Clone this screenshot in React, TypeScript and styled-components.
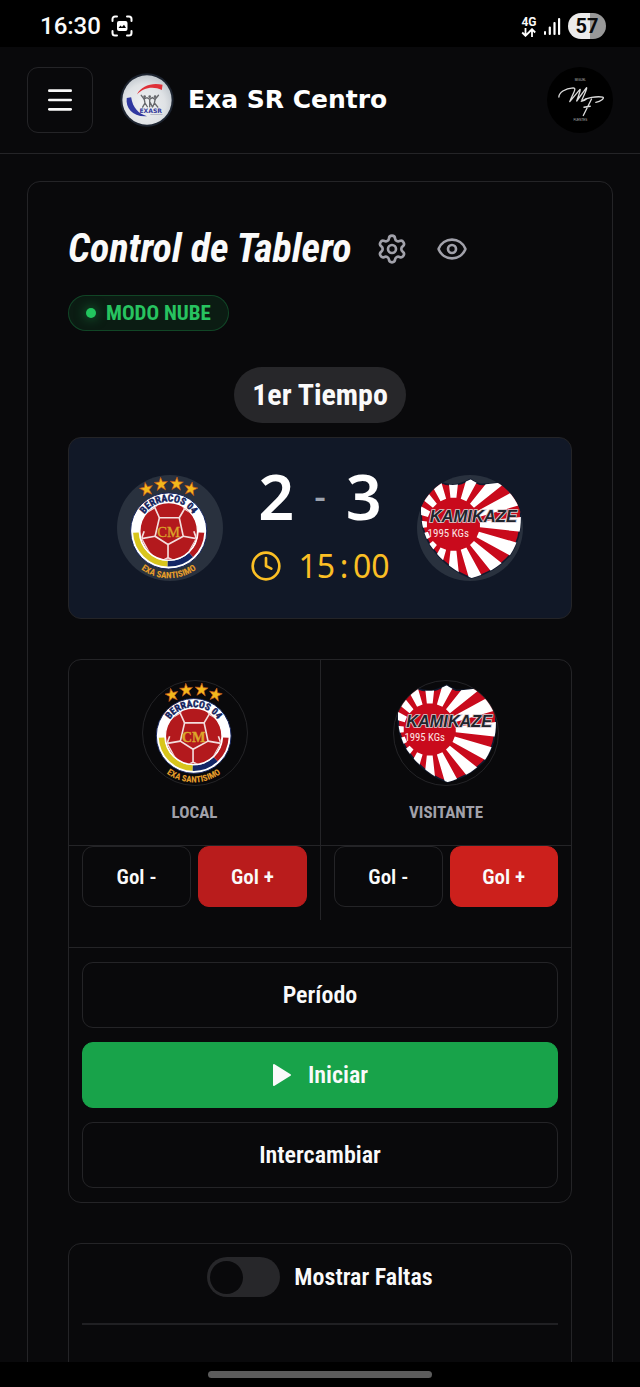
import React from "react";
import styled, { createGlobalStyle, css } from "styled-components";
import { Clock, Eye, Menu } from "lucide-react";

const narrow = `"Roboto Condensed", Roboto, sans-serif`;
const line = "#242427";
const ink = "#fafafa";
const surface = "#09090b";

const GlobalStyle = createGlobalStyle`
  *, *::before, *::after { box-sizing: border-box; }
  body { margin: 0; background: #000; color: ${ink}; font-family: ${narrow}; }
  h1, p { margin: 0; }
  svg { display: block; flex: none; }
`;

const Screen = styled.div`
  display: flex;
  flex-direction: column;
  height: 100vh;
  background: ${surface};
`;

const StatusBar = styled.div`
  flex: none;
  display: flex;
  align-items: center;
  justify-content: space-between;
  height: 47px;
  padding: 5px 34px 0 40px;
  background: #000;
  font-family: Roboto, sans-serif;
`;

const StatusGroup = styled.div<{ $gap: number }>`
  display: flex;
  align-items: center;
  gap: ${(p) => p.$gap}px;
`;

const Time = styled.span`
  font-size: 24px;
  font-weight: 500;
  line-height: 28px;
`;

const Network = styled.div`
  display: flex;
  flex-direction: column;
  align-items: center;
  font-size: 12px;
  font-weight: 700;
  line-height: 12px;
`;

const Battery = styled.div`
  width: 38px;
  height: 26px;
  border-radius: 13px;
  background: linear-gradient(90deg, #ececec 57%, #989898 57%);
  color: #0a0a0a;
  font-size: 20px;
  font-weight: 700;
  line-height: 27px;
  text-align: center;
`;

const Header = styled.header`
  flex: none;
  display: flex;
  align-items: center;
  height: 107px;
  padding: 0 27px;
  border-bottom: 1px solid ${line};
`;

const MenuButton = styled.button`
  display: grid;
  place-items: center;
  width: 66px;
  height: 66px;
  padding: 0;
  border: 1px solid ${line};
  border-radius: 11px;
  background: transparent;
  color: ${ink};
`;

const Brand = styled.a`
  display: flex;
  align-items: center;
  gap: 14px;
  margin-left: 27px;
  color: #fff;
  font-family: "DejaVu Sans", sans-serif;
  font-size: 25px;
  font-weight: 700;
  line-height: 32px;
  text-decoration: none;
  white-space: nowrap;
`;

const AvatarButton = styled.button`
  width: 66px;
  height: 66px;
  margin-left: auto;
  padding: 0;
  border: 0;
  border-radius: 50%;
  background: #000;
`;

const Scroller = styled.main`
  flex: 1;
  min-height: 0;
  padding: 27px 27px 0;
  overflow-y: auto;
  scrollbar-width: none;
`;

const Panel = styled.section`
  display: flex;
  flex-direction: column;
  gap: 40px;
  padding: 40px;
  border: 1px solid ${line};
  border-radius: 13px;
`;

const Heading = styled.div`
  display: flex;
  flex-direction: column;
  align-items: flex-start;
  gap: 20px;
  margin-bottom: -4px;
`;

const TitleRow = styled.div`
  display: flex;
  align-items: center;
  height: 53px;
`;

const Title = styled.h1`
  margin-right: 24px;
  font-size: 40px;
  font-style: italic;
  font-weight: 700;
  line-height: 56px;
  white-space: nowrap;
`;

const IconButton = styled.button`
  display: grid;
  place-items: center;
  width: 32px;
  height: 32px;
  margin-right: 28px;
  padding: 0;
  border: 0;
  background: transparent;
  color: #a1a1aa;
`;

const ModeBadge = styled.span`
  display: flex;
  align-items: center;
  gap: 10px;
  height: 36px;
  padding: 0 17px;
  border: 1px solid rgba(34, 197, 94, 0.25);
  border-radius: 18px;
  background: rgba(34, 197, 94, 0.1);
  color: #27c360;
  font-size: 21px;
  font-weight: 700;
  line-height: 24px;
`;

const Dot = styled.i`
  width: 10px;
  height: 10px;
  border-radius: 50%;
  background: #22c55e;
  box-shadow: 0 0 12px rgba(34, 197, 94, 0.6);
`;

const Match = styled.div`
  display: flex;
  flex-direction: column;
  align-items: center;
  gap: 14px;
`;

const PeriodPill = styled.span`
  padding: 10px 18px;
  border-radius: 28px;
  background: #27272a;
  font-size: 30px;
  font-weight: 700;
  line-height: 36px;
`;

const Scoreboard = styled.div`
  display: flex;
  align-items: center;
  justify-content: center;
  gap: 27px;
  width: 100%;
  height: 182px;
  border: 1px solid ${line};
  border-radius: 13px;
  background: #111827;
`;

const Disc = styled.div<{ $filled?: boolean }>`
  flex: none;
  width: 106px;
  height: 106px;
  border-radius: 50%;
  overflow: hidden;
  ${(p) =>
    p.$filled
      ? css`
          background: #29313e;
        `
      : css`
          border: 1px solid ${line};
        `}
`;

const ScoreColumn = styled.div`
  display: flex;
  flex-direction: column;
  align-items: center;
  gap: 14px;
  font-family: "Noto Sans", sans-serif;
`;

const Score = styled.div`
  display: flex;
  align-items: center;
  gap: 20px;
  color: #fff;
  font-size: 63px;
  font-weight: 600;
  line-height: 62px;
`;

const Dash = styled.span`
  color: #9ca3af;
  font-size: 36px;
  font-weight: 500;
`;

const GameClock = styled.div`
  display: flex;
  align-items: center;
  gap: 16px;
  height: 50px;
  color: #fbbf24;
  font-size: 32px;
  line-height: 50px;
`;

const Colon = styled.span`
  display: inline-block;
  width: 18px;
  text-align: center;
`;

const Card = styled.div`
  border: 1px solid ${line};
  border-radius: 13px;
`;

const Teams = styled.div`
  display: grid;
  grid-template-columns: 1fr 1fr;
`;

const Team = styled.div`
  & + & {
    border-left: 1px solid ${line};
  }
`;

const TeamHead = styled.div`
  display: flex;
  flex-direction: column;
  align-items: center;
  gap: 14px;
  height: 186px;
  padding-top: 20px;
  border-bottom: 1px solid ${line};
  color: #a1a1aa;
  font-size: 17px;
  font-weight: 700;
  line-height: 24px;
`;

const GoalRow = styled.div`
  display: grid;
  grid-template-columns: 1fr 1fr;
  gap: 7px;
  padding: 0 13px 13px;
`;

const ActionButton = styled.button<{ $fill?: string; $compact?: boolean }>`
  display: flex;
  align-items: center;
  justify-content: center;
  gap: 16px;
  height: ${(p) => (p.$compact ? 61 : 66)}px;
  padding: 0;
  border: 1px solid ${(p) => p.$fill ?? line};
  border-radius: 11px;
  background: ${(p) => p.$fill ?? "transparent"};
  color: ${ink};
  font-family: inherit;
  font-size: ${(p) => (p.$compact ? 21 : 24)}px;
  font-weight: 600;
  line-height: 32px;
`;

const Actions = styled.div`
  display: flex;
  flex-direction: column;
  gap: 14px;
  margin-top: 27px;
  padding: 14px 13px;
  border-top: 1px solid ${line};
`;

const FoulsCard = styled(Card)`
  height: 240px;
  padding: 13px;
`;

const SwitchLabel = styled.label`
  display: flex;
  align-items: center;
  justify-content: center;
  gap: 14px;
  padding-bottom: 26px;
  border-bottom: 2px solid #202023;
  font-size: 24px;
  font-weight: 600;
  line-height: 40px;
`;

const Switch = styled.input`
  display: flex;
  align-items: center;
  appearance: none;
  width: 73px;
  height: 40px;
  margin: 0;
  padding: 3px;
  border-radius: 20px;
  background: #27272a;

  &::before {
    content: "";
    width: 33px;
    height: 33px;
    border-radius: 50%;
    background: ${surface};
  }

  &:checked {
    justify-content: flex-end;
    background: #16a34a;
  }
`;

const GestureBar = styled.div`
  flex: none;
  display: flex;
  justify-content: center;
  height: 25px;
  padding-top: 9px;
  background: #000;
`;

const GestureHandle = styled.i`
  width: 35%;
  height: 7px;
  border-radius: 4px;
  background: #5c5c5c;
`;

function CaptureIcon() {
  return (
    <svg width="22" height="22" viewBox="0 0 22 22" fill="none" stroke="#fff" strokeWidth="2" strokeLinecap="round">
      <path d="M1.500 6V4A2.500 2.500 0 0 1 4 1.500H6M16 1.500H18A2.500 2.500 0 0 1 20.500 4V6M20.500 16V18A2.500 2.500 0 0 1 18 20.500H16M6 20.500H4A2.500 2.500 0 0 1 1.500 18V16" />
      <rect x="6" y="6" width="10.500" height="10" rx="2" fill="#fff" stroke="none" />
      <path d="M7.500 13L9.500 10.500L11 12L13 9.800L15 13Z" fill="#000" stroke="none" />
    </svg>
  );
}

function DataArrows() {
  return (
    <svg width="16" height="9" viewBox="0 0 16 9" fill="none" stroke="#fff" strokeWidth="1.800">
      <path d="M4.500 0V7.500M1.200 4.500L4.500 7.800L7.800 4.500M11 9V1.500M7.800 4.500L11 1.200L14.200 4.500" />
    </svg>
  );
}

function SignalBars() {
  return (
    <svg width="17" height="18" viewBox="0 0 17 18" fill="#fff">
      <rect x="0" y="14" width="2" height="4" rx="1" />
      <rect x="4.700" y="9.500" width="2.200" height="8.500" rx="1" />
      <rect x="9.400" y="5" width="2.200" height="13" rx="1" />
      <rect x="14" y="1" width="2.200" height="17" rx="1" />
    </svg>
  );
}

function GearIcon() {
  return (
    <svg width="32" height="32" viewBox="0 0 24 24" fill="none" stroke="currentColor" strokeWidth="2" strokeLinecap="round" strokeLinejoin="round">
      <path d="M9.671 4.136a2.340 2.340 0 0 1 4.659 0 2.340 2.340 0 0 0 3.319 1.915 2.340 2.340 0 0 1 2.330 4.033 2.340 2.340 0 0 0 0 3.831 2.340 2.340 0 0 1-2.330 4.033 2.340 2.340 0 0 0-3.319 1.915 2.340 2.340 0 0 1-4.659 0 2.340 2.340 0 0 0-3.320-1.915 2.340 2.340 0 0 1-2.330-4.033 2.340 2.340 0 0 0 0-3.831A2.340 2.340 0 0 1 6.350 6.051a2.340 2.340 0 0 0 3.319-1.915" />
      <circle cx="12" cy="12" r="3" />
    </svg>
  );
}

function ExaLogo() {
  return (
    <svg width="54" height="54" viewBox="0 0 160 160">
      <defs>
        <radialGradient id="exa-shade" cx="45%" cy="60%" r="60%">
          <stop offset="0" stopColor="#f1f2f3" />
          <stop offset="0.700" stopColor="#dfe2e5" />
          <stop offset="1" stopColor="#c3c9cf" />
        </radialGradient>
      </defs>
      <circle cx="80" cy="80" r="79" fill="#1d2430" />
      <circle cx="80" cy="80" r="73" fill="url(#exa-shade)" />
      <path d="M50 64C63 38 94 28 126 35L124 50C98 38 68 43 50 64Z" fill="#df3038" />
      <path d="M20 74C16 104 38 131 80 128C55 121 38 104 33 72Z" fill="#3038a0" />
      <g stroke="#66686c" strokeWidth="4" fill="none" strokeLinecap="round">
        <path d="M63 66L71 77L80 73L88 78L96 73L104 78L114 66" />
        <path d="M72 78L74 89L67 101M74 89L81 100M88 79V100M90 88L96 101M104 78L102 89L97 100M102 89L112 101" />
      </g>
      <g fill="#66686c">
        <circle cx="73" cy="70" r="4" />
        <circle cx="88" cy="70" r="4" />
        <circle cx="104" cy="70" r="4" />
      </g>
      <text x="91" y="118" textAnchor="middle" fontFamily="DejaVu Sans, sans-serif" fontSize="18" fontWeight="700" fill="#343a9c">EXASR</text>
      <path d="M90 123H126" stroke="#9fa3b5" strokeWidth="2" />
    </svg>
  );
}

function SignatureLogo() {
  return (
    <svg width="66" height="66" viewBox="0 0 200 200" fill="none" stroke="#dcdcdc" strokeLinecap="round" strokeLinejoin="round">
      <path d="M36 91C36 79 54 64 79 63C92 64 78 80 69 105L98 70C104 62 99 78 90 103L117 66C124 56 120 70 106 99C106 106 114 101 119 97" strokeWidth="4" />
      <path d="M104 104C120 93 150 88 169 91C176 94 163 104 148 107M135 97L110 147M112 122L131 119" strokeWidth="4" />
      <g fill="#bdbdbd" stroke="none" fontFamily="Liberation Sans, sans-serif" fontSize="9" textAnchor="middle">
        <text x="101" y="43">MIGUEL</text>
        <text x="101" y="165">FUENTES</text>
      </g>
    </svg>
  );
}

const STAR = "M0-21L5-7H20L8 3L13 18L0 9L-13 18L-8 3L-20-7H-5Z";
const STARS = [
  [89, 43, -12],
  [133, 28, -4],
  [180, 27, 4],
  [223, 42, 12],
];

function BerracosCrest({ id }: { id: string }) {
  return (
    <svg width="100%" viewBox="0 0 320 320" role="img" aria-label="Berracos 04">
      <defs>
        <path id={`${id}-top`} d="M67 169A89 89 0 0 1 245 169" />
        <path id={`${id}-base`} d="M14 170A142 142 0 0 0 298 170" />
        <clipPath id={`${id}-ball`}>
          <circle cx="156" cy="170" r="85" />
        </clipPath>
      </defs>
      {STARS.map(([x, y, turn]) => (
        <path key={x} d={STAR} transform={`translate(${x} ${y}) rotate(${turn})`} fill="#f2b91c" stroke="#c8501c" strokeWidth="2" />
      ))}
      <circle cx="156" cy="169" r="115" fill="#fff" stroke="#15245e" strokeWidth="3" />
      <g fill="none" strokeWidth="17">
        <path d="M57 174A99 99 0 0 0 153 268" stroke="#d8c51c" />
        <path d="M153 268A99 99 0 0 0 224 241" stroke="#142666" />
        <path d="M224 241A99 99 0 0 0 255 174" stroke="#b3191d" />
      </g>
      <circle cx="156" cy="170" r="87" fill="#b3191d" stroke="#fff" strokeWidth="4" />
      <g clipPath={`url(#${id}-ball)`} fill="none" stroke="#f3dede" strokeWidth="5">
        <path d="M128 129H188L200 185L154 210L115 185Z" />
        <path d="M128 129L114 98L124 84M188 129L204 102L192 84M200 185L240 192M232 170L240 192L214 238M154 210V250L130 262M154 250L180 262M115 185L74 192L82 170M74 192L100 240" />
        <path d="M114 98L84 116M204 102L230 118" />
      </g>
      <text x="156" y="188" textAnchor="middle" fontFamily="Liberation Serif, serif" fontSize="44" fill="#dba52a" stroke="#dba52a">CM</text>
      <text fontFamily={narrow} fontSize="30" fontWeight="800" fill="#15245e" stroke="#15245e" textAnchor="middle">
        <textPath href={`#${id}-top`} startOffset="50%">BERRACOS 04</textPath>
      </text>
      <text fontFamily={narrow} fontSize="27" fontWeight="800" fill="#e39b2a" textAnchor="middle">
        <textPath href={`#${id}-base`} startOffset="50%">EXA SANTISIMO</textPath>
      </text>
    </svg>
  );
}

const RAYS = Array.from({ length: 16 }, (_, i) => {
  const turn = (i * Math.PI) / 8;
  const point = (r: number, offset: number) =>
    `${Math.round(110 + r * Math.cos(turn + offset))} ${Math.round(149 + r * Math.sin(turn + offset))}`;
  return `M${point(80, -0.11)}L${point(320, -0.11)}L${point(320, 0.11)}L${point(80, 0.11)}Z`;
}).join("");

const SHIELD =
  "M72 23C92 32 120 32 132 26C146 21 155 17 162 13C168 18 179 24 190 28C215 30 235 24 255 23C275 38 294 58 311 87C318 145 312 194 282 240C250 278 205 301 165 311C120 296 75 262 40 212C17 175 9 128 13 82C26 54 48 34 72 23Z";

function KamikazeCrest({ id }: { id: string }) {
  return (
    <svg width="100%" viewBox="0 0 320 320" role="img" aria-label="Kamikaze">
      <clipPath id={`${id}-shield`}>
        <path d={SHIELD} />
      </clipPath>
      <path d={SHIELD} fill="#c90a1c" stroke="#111a2e" strokeWidth="5" />
      <path d={RAYS} fill="#fff" clipPath={`url(#${id}-shield)`} />
      <text x="170" y="143" textAnchor="middle" fontFamily="Liberation Sans, sans-serif" fontSize="50" fontStyle="italic" fontWeight="700" fill="#20242c" stroke="#d9cdd2" strokeWidth="5" paintOrder="stroke">KAMIKAZE</text>
      <text x="32" y="186" fontFamily={narrow} fontSize="33" fontWeight="400" fill="#fbe3e3">1995 KGs</text>
    </svg>
  );
}

function PlayIcon() {
  return (
    <svg width="20" height="24" viewBox="0 0 20 24" fill="#fafafa" stroke="#fafafa" strokeWidth="2" strokeLinejoin="round">
      <path d="M2 2L18 12L2 22Z" />
    </svg>
  );
}

function TeamControls({ label, fill, children }: { label: string; fill: string; children: React.ReactNode }) {
  return (
    <Team>
      <TeamHead>
        <Disc>{children}</Disc>
        <p>{label}</p>
      </TeamHead>
      <GoalRow>
        <ActionButton $compact>Gol -</ActionButton>
        <ActionButton $compact $fill={fill}>Gol +</ActionButton>
      </GoalRow>
    </Team>
  );
}

export default function App() {
  return (
    <Screen>
      <GlobalStyle />
      <StatusBar>
        <StatusGroup $gap={10}>
          <Time>16:30</Time>
          <CaptureIcon />
        </StatusGroup>
        <StatusGroup $gap={7}>
          <Network>
            4G
            <DataArrows />
          </Network>
          <SignalBars />
          <Battery>57</Battery>
        </StatusGroup>
      </StatusBar>
      <Header>
        <MenuButton aria-label="Menú">
          <Menu size={32} />
        </MenuButton>
        <Brand href="#inicio">
          <ExaLogo />
          Exa SR Centro
        </Brand>
        <AvatarButton aria-label="Perfil">
          <SignatureLogo />
        </AvatarButton>
      </Header>
      <Scroller>
        <Panel>
          <Heading>
            <TitleRow>
              <Title>Control de Tablero</Title>
              <IconButton aria-label="Configuración">
                <GearIcon />
              </IconButton>
              <IconButton aria-label="Vista previa">
                <Eye size={32} />
              </IconButton>
            </TitleRow>
            <ModeBadge>
              <Dot />
              MODO NUBE
            </ModeBadge>
          </Heading>
          <Match>
            <PeriodPill>1er Tiempo</PeriodPill>
            <Scoreboard>
              <Disc $filled>
                <BerracosCrest id="score-local" />
              </Disc>
              <ScoreColumn>
                <Score>
                  <span>2</span>
                  <Dash>-</Dash>
                  <span>3</span>
                </Score>
                <GameClock>
                  <Clock size={32} />
                  <span>
                    15<Colon>:</Colon>00
                  </span>
                </GameClock>
              </ScoreColumn>
              <Disc $filled>
                <KamikazeCrest id="score-visitor" />
              </Disc>
            </Scoreboard>
          </Match>
          <Card>
            <Teams>
              <TeamControls label="LOCAL" fill="#b91c1c">
                <BerracosCrest id="team-local" />
              </TeamControls>
              <TeamControls label="VISITANTE" fill="#cc201c">
                <KamikazeCrest id="team-visitor" />
              </TeamControls>
            </Teams>
            <Actions>
              <ActionButton>Período</ActionButton>
              <ActionButton $fill="#18a34a">
                <PlayIcon />
                Iniciar
              </ActionButton>
              <ActionButton>Intercambiar</ActionButton>
            </Actions>
          </Card>
          <FoulsCard>
            <SwitchLabel>
              <Switch type="checkbox" role="switch" />
              Mostrar Faltas
            </SwitchLabel>
          </FoulsCard>
        </Panel>
      </Scroller>
      <GestureBar>
        <GestureHandle />
      </GestureBar>
    </Screen>
  );
}
